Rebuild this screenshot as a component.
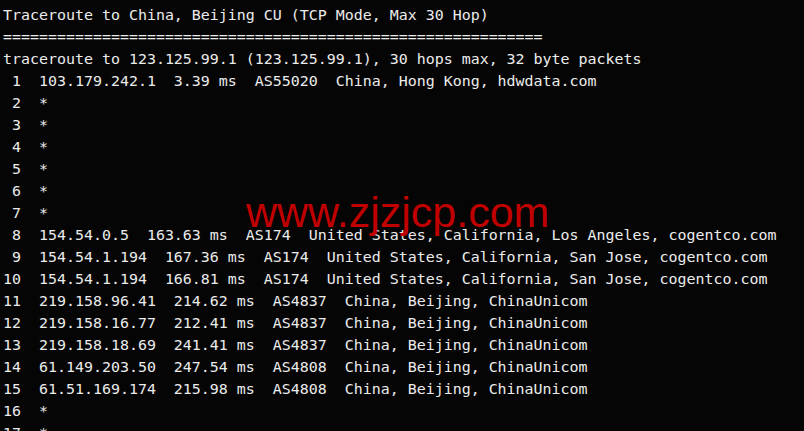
import React from "react";

const lines: string[] = [
  "Traceroute to China, Beijing CU (TCP Mode, Max 30 Hop)",
  "============================================================",
  "traceroute to 123.125.99.1 (123.125.99.1), 30 hops max, 32 byte packets",
  " 1  103.179.242.1  3.39 ms  AS55020  China, Hong Kong, hdwdata.com",
  " 2  *",
  " 3  *",
  " 4  *",
  " 5  *",
  " 6  *",
  " 7  *",
  " 8  154.54.0.5  163.63 ms  AS174  United States, California, Los Angeles, cogentco.com",
  " 9  154.54.1.194  167.36 ms  AS174  United States, California, San Jose, cogentco.com",
  "10  154.54.1.194  166.81 ms  AS174  United States, California, San Jose, cogentco.com",
  "11  219.158.96.41  214.62 ms  AS4837  China, Beijing, ChinaUnicom",
  "12  219.158.16.77  212.41 ms  AS4837  China, Beijing, ChinaUnicom",
  "13  219.158.18.69  241.41 ms  AS4837  China, Beijing, ChinaUnicom",
  "14  61.149.203.50  247.54 ms  AS4808  China, Beijing, ChinaUnicom",
  "15  61.51.169.174  215.98 ms  AS4808  China, Beijing, ChinaUnicom",
  "16  *",
  "17  *",
];

export default function App() {
  return (
    <div className="relative w-[804px] h-[431px] overflow-hidden bg-[#050505]">
      <div className="pl-[3px] pt-[4px] font-['DejaVu_Sans_Mono',monospace] text-[14.95px] leading-[22px] text-[#ececec] whitespace-pre">
        {lines.map((l, i) => (
          <div key={i}>{l}</div>
        ))}
      </div>
      {/* watermark */}
      <div className="absolute left-[246px] top-[186px] font-['Liberation_Sans',Arial,sans-serif] text-[43px] leading-[52px] text-[#c00000] whitespace-nowrap">
        www.zjzjcp.com
      </div>
    </div>
  );
}
